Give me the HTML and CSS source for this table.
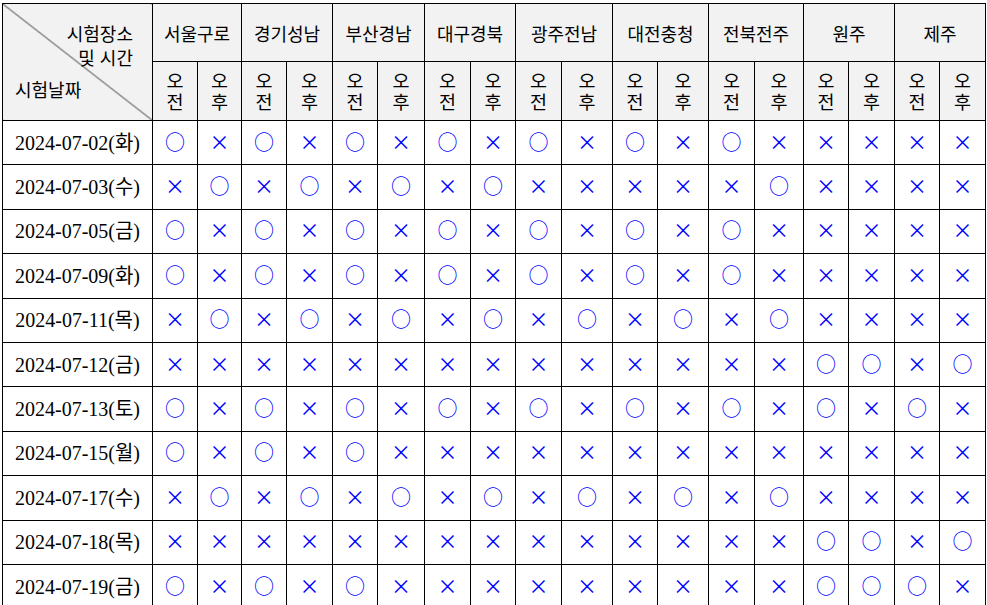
FILE: index.html
```html
<!DOCTYPE html>
<html lang="ko">
<head>
<meta charset="utf-8">
<title>시험일정</title>
<link rel="stylesheet" href="styles.css">
</head>
<body>
<table class="schedule">
  <colgroup>
    <col class="w150">
    <col class="w45"><col class="w44">
    <col class="w45"><col class="w46">
    <col class="w45"><col class="w47">
    <col class="w46"><col class="w45">
    <col class="w46"><col class="w51">
    <col class="w45"><col class="w51">
    <col class="w46"><col class="w49">
    <col class="w45"><col class="w46">
    <col class="w45"><col class="w46">
  </colgroup>
  <thead>
    <tr class="row-region">
      <th class="corner" rowspan="2">
        <div class="corner-inner">
          <div class="corner-top">시험장소<br>및 시간</div>
          <div class="corner-bottom">시험날짜</div>
        </div>
      </th>
      <th class="region" colspan="2">서울구로</th>
      <th class="region" colspan="2">경기성남</th>
      <th class="region" colspan="2">부산경남</th>
      <th class="region" colspan="2">대구경북</th>
      <th class="region" colspan="2">광주전남</th>
      <th class="region" colspan="2">대전충청</th>
      <th class="region" colspan="2">전북전주</th>
      <th class="region" colspan="2">원주</th>
      <th class="region" colspan="2">제주</th>
    </tr>
    <tr class="row-time">
      <th class="time"><span class="ch">오</span><span class="ch">전</span></th><th class="time"><span class="ch">오</span><span class="ch">후</span></th>
      <th class="time"><span class="ch">오</span><span class="ch">전</span></th><th class="time"><span class="ch">오</span><span class="ch">후</span></th>
      <th class="time"><span class="ch">오</span><span class="ch">전</span></th><th class="time"><span class="ch">오</span><span class="ch">후</span></th>
      <th class="time"><span class="ch">오</span><span class="ch">전</span></th><th class="time"><span class="ch">오</span><span class="ch">후</span></th>
      <th class="time"><span class="ch">오</span><span class="ch">전</span></th><th class="time"><span class="ch">오</span><span class="ch">후</span></th>
      <th class="time"><span class="ch">오</span><span class="ch">전</span></th><th class="time"><span class="ch">오</span><span class="ch">후</span></th>
      <th class="time"><span class="ch">오</span><span class="ch">전</span></th><th class="time"><span class="ch">오</span><span class="ch">후</span></th>
      <th class="time"><span class="ch">오</span><span class="ch">전</span></th><th class="time"><span class="ch">오</span><span class="ch">후</span></th>
      <th class="time"><span class="ch">오</span><span class="ch">전</span></th><th class="time"><span class="ch">오</span><span class="ch">후</span></th>
    </tr>
  </thead>
  <tbody>
    <tr>
      <td class="date">2024-07-02(화)</td>
      <td><span class="o">○</span></td><td><span class="x">×</span></td>
      <td><span class="o">○</span></td><td><span class="x">×</span></td>
      <td><span class="o">○</span></td><td><span class="x">×</span></td>
      <td><span class="o">○</span></td><td><span class="x">×</span></td>
      <td><span class="o">○</span></td><td><span class="x">×</span></td>
      <td><span class="o">○</span></td><td><span class="x">×</span></td>
      <td><span class="o">○</span></td><td><span class="x">×</span></td>
      <td><span class="x">×</span></td><td><span class="x">×</span></td>
      <td><span class="x">×</span></td><td><span class="x">×</span></td>
    </tr>
    <tr>
      <td class="date">2024-07-03(수)</td>
      <td><span class="x">×</span></td><td><span class="o">○</span></td>
      <td><span class="x">×</span></td><td><span class="o">○</span></td>
      <td><span class="x">×</span></td><td><span class="o">○</span></td>
      <td><span class="x">×</span></td><td><span class="o">○</span></td>
      <td><span class="x">×</span></td><td><span class="x">×</span></td>
      <td><span class="x">×</span></td><td><span class="x">×</span></td>
      <td><span class="x">×</span></td><td><span class="o">○</span></td>
      <td><span class="x">×</span></td><td><span class="x">×</span></td>
      <td><span class="x">×</span></td><td><span class="x">×</span></td>
    </tr>
    <tr>
      <td class="date">2024-07-05(금)</td>
      <td><span class="o">○</span></td><td><span class="x">×</span></td>
      <td><span class="o">○</span></td><td><span class="x">×</span></td>
      <td><span class="o">○</span></td><td><span class="x">×</span></td>
      <td><span class="o">○</span></td><td><span class="x">×</span></td>
      <td><span class="o">○</span></td><td><span class="x">×</span></td>
      <td><span class="o">○</span></td><td><span class="x">×</span></td>
      <td><span class="o">○</span></td><td><span class="x">×</span></td>
      <td><span class="x">×</span></td><td><span class="x">×</span></td>
      <td><span class="x">×</span></td><td><span class="x">×</span></td>
    </tr>
    <tr>
      <td class="date">2024-07-09(화)</td>
      <td><span class="o">○</span></td><td><span class="x">×</span></td>
      <td><span class="o">○</span></td><td><span class="x">×</span></td>
      <td><span class="o">○</span></td><td><span class="x">×</span></td>
      <td><span class="o">○</span></td><td><span class="x">×</span></td>
      <td><span class="o">○</span></td><td><span class="x">×</span></td>
      <td><span class="o">○</span></td><td><span class="x">×</span></td>
      <td><span class="o">○</span></td><td><span class="x">×</span></td>
      <td><span class="x">×</span></td><td><span class="x">×</span></td>
      <td><span class="x">×</span></td><td><span class="x">×</span></td>
    </tr>
    <tr>
      <td class="date">2024-07-11(목)</td>
      <td><span class="x">×</span></td><td><span class="o">○</span></td>
      <td><span class="x">×</span></td><td><span class="o">○</span></td>
      <td><span class="x">×</span></td><td><span class="o">○</span></td>
      <td><span class="x">×</span></td><td><span class="o">○</span></td>
      <td><span class="x">×</span></td><td><span class="o">○</span></td>
      <td><span class="x">×</span></td><td><span class="o">○</span></td>
      <td><span class="x">×</span></td><td><span class="o">○</span></td>
      <td><span class="x">×</span></td><td><span class="x">×</span></td>
      <td><span class="x">×</span></td><td><span class="x">×</span></td>
    </tr>
    <tr>
      <td class="date">2024-07-12(금)</td>
      <td><span class="x">×</span></td><td><span class="x">×</span></td>
      <td><span class="x">×</span></td><td><span class="x">×</span></td>
      <td><span class="x">×</span></td><td><span class="x">×</span></td>
      <td><span class="x">×</span></td><td><span class="x">×</span></td>
      <td><span class="x">×</span></td><td><span class="x">×</span></td>
      <td><span class="x">×</span></td><td><span class="x">×</span></td>
      <td><span class="x">×</span></td><td><span class="x">×</span></td>
      <td><span class="o">○</span></td><td><span class="o">○</span></td>
      <td><span class="x">×</span></td><td><span class="o">○</span></td>
    </tr>
    <tr>
      <td class="date">2024-07-13(토)</td>
      <td><span class="o">○</span></td><td><span class="x">×</span></td>
      <td><span class="o">○</span></td><td><span class="x">×</span></td>
      <td><span class="o">○</span></td><td><span class="x">×</span></td>
      <td><span class="o">○</span></td><td><span class="x">×</span></td>
      <td><span class="o">○</span></td><td><span class="x">×</span></td>
      <td><span class="o">○</span></td><td><span class="x">×</span></td>
      <td><span class="o">○</span></td><td><span class="x">×</span></td>
      <td><span class="o">○</span></td><td><span class="x">×</span></td>
      <td><span class="o">○</span></td><td><span class="x">×</span></td>
    </tr>
    <tr>
      <td class="date">2024-07-15(월)</td>
      <td><span class="o">○</span></td><td><span class="x">×</span></td>
      <td><span class="o">○</span></td><td><span class="x">×</span></td>
      <td><span class="o">○</span></td><td><span class="x">×</span></td>
      <td><span class="x">×</span></td><td><span class="x">×</span></td>
      <td><span class="x">×</span></td><td><span class="x">×</span></td>
      <td><span class="x">×</span></td><td><span class="x">×</span></td>
      <td><span class="x">×</span></td><td><span class="x">×</span></td>
      <td><span class="x">×</span></td><td><span class="x">×</span></td>
      <td><span class="x">×</span></td><td><span class="x">×</span></td>
    </tr>
    <tr>
      <td class="date">2024-07-17(수)</td>
      <td><span class="x">×</span></td><td><span class="o">○</span></td>
      <td><span class="x">×</span></td><td><span class="o">○</span></td>
      <td><span class="x">×</span></td><td><span class="o">○</span></td>
      <td><span class="x">×</span></td><td><span class="o">○</span></td>
      <td><span class="x">×</span></td><td><span class="o">○</span></td>
      <td><span class="x">×</span></td><td><span class="o">○</span></td>
      <td><span class="x">×</span></td><td><span class="o">○</span></td>
      <td><span class="x">×</span></td><td><span class="x">×</span></td>
      <td><span class="x">×</span></td><td><span class="x">×</span></td>
    </tr>
    <tr>
      <td class="date">2024-07-18(목)</td>
      <td><span class="x">×</span></td><td><span class="x">×</span></td>
      <td><span class="x">×</span></td><td><span class="x">×</span></td>
      <td><span class="x">×</span></td><td><span class="x">×</span></td>
      <td><span class="x">×</span></td><td><span class="x">×</span></td>
      <td><span class="x">×</span></td><td><span class="x">×</span></td>
      <td><span class="x">×</span></td><td><span class="x">×</span></td>
      <td><span class="x">×</span></td><td><span class="x">×</span></td>
      <td><span class="o">○</span></td><td><span class="o">○</span></td>
      <td><span class="x">×</span></td><td><span class="o">○</span></td>
    </tr>
    <tr>
      <td class="date">2024-07-19(금)</td>
      <td><span class="o">○</span></td><td><span class="x">×</span></td>
      <td><span class="o">○</span></td><td><span class="x">×</span></td>
      <td><span class="o">○</span></td><td><span class="x">×</span></td>
      <td><span class="x">×</span></td><td><span class="x">×</span></td>
      <td><span class="x">×</span></td><td><span class="x">×</span></td>
      <td><span class="x">×</span></td><td><span class="x">×</span></td>
      <td><span class="x">×</span></td><td><span class="x">×</span></td>
      <td><span class="o">○</span></td><td><span class="o">○</span></td>
      <td><span class="o">○</span></td><td><span class="x">×</span></td>
    </tr>
  </tbody>
</table>
</body>
</html>
```

FILE: styles.css
```css
html, body {
  margin: 0;
  background: #ffffff;
}

body {
  padding: 3px 0 0 2px;
}

.schedule {
  border-collapse: collapse;
  table-layout: fixed;
  width: 984px;
  font-family: "Noto Sans CJK KR", sans-serif;
  color: #000000;
}

.w150 { width: 150px; }
.w44 { width: 44px; }
.w45 { width: 45px; }
.w46 { width: 46px; }
.w47 { width: 47px; }
.w49 { width: 49px; }
.w51 { width: 51px; }

.schedule th,
.schedule td {
  border: 1px solid #000000;
  padding: 0;
  text-align: center;
  vertical-align: middle;
}

.schedule thead th {
  background: #f2f2f2;
  font-weight: normal;
}

.row-region { height: 58px; }
.row-time { height: 59px; }

.region {
  font-size: 18px;
  line-height: 22px;
  padding-top: 3px;
}

.time {
  font-size: 18.5px;
  line-height: 21px;
}

.time .ch {
  display: block;
  height: 21px;
  line-height: 21px;
}

.schedule thead th.corner {
  background: #f2f2f2 linear-gradient(to top right,
    rgba(0,0,0,0) calc(50% - 0.8px),
    #333333 50%,
    rgba(0,0,0,0) calc(50% + 0.8px));
  padding: 0;
}

.corner-inner {
  display: flex;
  flex-direction: column;
  height: 116px;
  font-size: 18px;
  line-height: 24px;
}

.corner-top {
  text-align: right;
  padding: 17px 19px 0 0;
}

.corner-bottom {
  text-align: left;
  padding: 8px 0 0 12px;
}

.schedule tbody tr {
  height: 44.4px;
}

.date {
  font-family: "Liberation Serif", "Noto Sans CJK KR", serif;
  font-size: 20px;
  line-height: 24px;
}

.o, .x {
  color: #0000ff;
  font-family: "Noto Sans CJK KR", sans-serif;
  font-size: 20px;
  line-height: 20px;
}
```
